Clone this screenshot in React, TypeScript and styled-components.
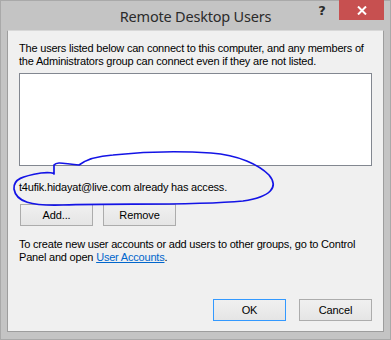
import styled, { createGlobalStyle } from 'styled-components';

const GlobalStyle = createGlobalStyle`
  html, body {
    margin: 0;
    padding: 0;
    background: #c4c4c4;
  }
`;

const Window = styled.div`
  position: relative;
  box-sizing: border-box;
  width: 391px;
  height: 340px;
  background: #c4c4c4;
  border: 1px solid #a9a9a9;
  display: flex;
  flex-direction: column;
  font-family: 'Liberation Sans', Arial, sans-serif;
  font-size: 11px;
  letter-spacing: -0.2px;
  color: #000;
`;

const TitleBar = styled.div`
  height: 29px;
  display: grid;
  grid-template-columns: 1fr auto 1fr;
  align-items: start;
`;

const Title = styled.div`
  grid-column: 2;
  padding-top: 5px;
  font-family: 'Noto Sans', 'Open Sans', sans-serif;
  font-size: 14.5px;
  line-height: 20px;
  color: #2b2b2b;
  letter-spacing: -0.2px;
`;

const Controls = styled.div`
  grid-column: 3;
  justify-self: end;
  display: flex;
  align-items: flex-start;
  margin-top: -1px;
  margin-right: 6px;
`;

const HelpGlyph = styled.span`
  width: 12px;
  margin-right: 11px;
  padding-top: 3px;
  font-family: 'DejaVu Sans', sans-serif;
  font-weight: bold;
  font-size: 13px;
  line-height: 16px;
  color: #2a2a2a;
  text-align: center;
`;

const CloseButton = styled.div`
  width: 45px;
  height: 20px;
  background: #c75050;
  display: flex;
  align-items: center;
  justify-content: center;
`;

const Client = styled.div`
  flex: 1;
  margin: 0 6px 7px 6px;
  box-sizing: border-box;
  background: #f0f0f0;
  border: 1px solid #9d9d9d;
  border-top-color: #d8d8d8;
  padding: 11px 11px 10px 11px;
  display: flex;
  flex-direction: column;
`;

const Paragraph = styled.p<{ $top?: number }>`
  margin: ${(p) => p.$top ?? 0}px 0 0 0;
  line-height: 13px;
  white-space: nowrap;
`;

const ListBox = styled.div`
  margin-top: 5px;
  height: 93px;
  box-sizing: border-box;
  background: #fff;
  border: 1px solid #828790;
`;

const ButtonRow = styled.div<{ $end?: boolean; $top?: string }>`
  display: flex;
  gap: ${(p) => (p.$end ? 13 : 10)}px;
  justify-content: ${(p) => (p.$end ? 'flex-end' : 'flex-start')};
  margin-top: ${(p) => p.$top ?? '0'};
  padding-left: ${(p) => (p.$end ? 0 : 1)}px;
`;

const Button = styled.button<{ $default?: boolean }>`
  width: 73px;
  height: 22px;
  box-sizing: border-box;
  padding: 0;
  font-family: 'Liberation Sans', Arial, sans-serif;
  font-size: 11px;
  letter-spacing: -0.1px;
  color: #000;
  border: 1px solid ${(p) => (p.$default ? '#3399ff' : '#acacac')};
  background: linear-gradient(#f0f0f0, #e5e5e5);
  border-radius: 0;
`;

const Link = styled.a`
  color: #0066cc;
  text-decoration: underline;
`;

const Scribble = styled.svg`
  position: absolute;
  left: 0;
  top: 0;
  pointer-events: none;
`;

export default function App() {
  return (
    <>
      <GlobalStyle />
      <Window>
        <TitleBar>
          <Title>Remote Desktop Users</Title>
          <Controls>
            <HelpGlyph>?</HelpGlyph>
            <CloseButton>
              <svg width="10" height="9" viewBox="0 0 10 9">
                <path d="M1 0.5 L9 8.5 M9 0.5 L1 8.5" stroke="#fff" strokeWidth="2" />
              </svg>
            </CloseButton>
          </Controls>
        </TitleBar>
        <Client>
          <Paragraph>
            The users listed below can connect to this computer, and any members of
            <br />
            the Administrators group can connect even if they are not listed.
          </Paragraph>
          <ListBox />
          <Paragraph $top={15}>t4ufik.hidayat@live.com already has access.</Paragraph>
          <ButtonRow $top="10px">
            <Button>Add...</Button>
            <Button>Remove</Button>
          </ButtonRow>
          <Paragraph $top={12}>
            To create new user accounts or add users to other groups, go to Control
            <br />
            Panel and open <Link href="#">User Accounts</Link>.
          </Paragraph>
          <ButtonRow $end $top="auto">
            <Button $default>OK</Button>
            <Button>Cancel</Button>
          </ButtonRow>
        </Client>
        <Scribble width="391" height="340" viewBox="0 0 391 340">
          <path
            d="M53 173 L53 164 C56 160 64 163 78 164 C86 158 96 155 112 154 C140 151 180 150 210 152 C238 154 258 164 268 174 C278 186 270 196 242 200 C190 205 120 202 62 204 C30 205 15 201 13 188 C12 178 22 175 40 172 C48 171 53 172 53 173"
            fill="none"
            stroke="#1414e6"
            strokeWidth="1.7"
            strokeLinecap="round"
            strokeLinejoin="round"
          />
        </Scribble>
      </Window>
    </>
  );
}
